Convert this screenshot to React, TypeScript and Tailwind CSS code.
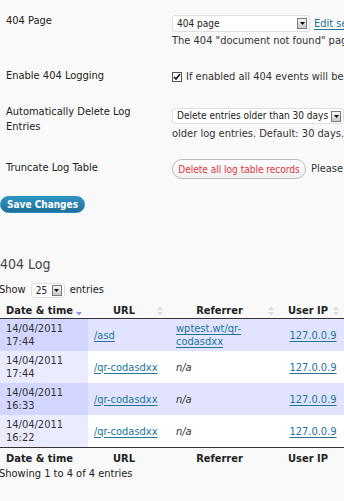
import type { ReactNode } from 'react'

const font = { fontFamily: '"DejaVu Sans Condensed", "DejaVu Sans", Verdana, sans-serif' }

function Arrow() {
  return (
    <span className="flex h-[11px] w-[10px] shrink-0 items-center justify-center border border-[#7a7a7a] bg-linear-to-b from-[#f6f6f6] to-[#c8c8c8]">
      <svg width="5" height="3" viewBox="0 0 5 3">
        <path d="M0 0h5L2.5 3z" fill="#000" />
      </svg>
    </span>
  )
}

function Select({ value, className }: { value: string; className: string }) {
  return (
    <div className={`flex items-center justify-between rounded-[3px] border border-[#dfdfdf] bg-white pl-[4px] pr-[2px] text-[10px] text-[#222] ${className}`}>
      <span className="whitespace-nowrap leading-none">{value}</span>
      <Arrow />
    </div>
  )
}

function SortIcon({ kind }: { kind: 'both' | 'desc' | 'none' }) {
  if (kind === 'none') return <span className="block w-[6px]" />
  if (kind === 'desc')
    return (
      <svg width="6" height="10" viewBox="0 0 6 10" className="block">
        <path d="M0 6h6L3 9.5z" fill="#8f93ee" />
      </svg>
    )
  return (
    <svg width="6" height="10" viewBox="0 0 6 10" className="block">
      <path d="M0 4L3 0.5 6 4z" fill="#dcdcdc" />
      <path d="M0 6h6L3 9.5z" fill="#dcdcdc" />
    </svg>
  )
}

const cols = [
  { label: 'Date & time', width: 'w-[88px]', mr: 'mr-[6px]', sort: 'desc' as const },
  { label: 'URL', width: 'w-[80px]', mr: 'mr-[5px]', sort: 'both' as const },
  { label: 'Referrer', width: 'w-[112px]', mr: 'mr-[6px]', sort: 'both' as const },
  { label: 'User IP', width: 'w-[66px]', mr: 'mr-[7px]', sort: 'both' as const },
]

function HeadRow({ footer }: { footer?: boolean }) {
  return (
    <div className={`flex font-bold text-[#222] ${footer ? 'border-t border-[#333] pt-[4px] pb-[1px]' : 'border-b border-[#333] pt-[6px] pb-[1px]'}`}>
      {cols.map((c) => (
        <div key={c.label} className={`flex items-center pl-[3px] ${c.width}`}>
          <span className="flex-1 text-center leading-[13px] whitespace-nowrap">{c.label}</span>
          <span className={c.mr}>
            <SortIcon kind={footer ? 'none' : c.sort} />
          </span>
        </div>
      ))}
    </div>
  )
}

const rows = [
  { date: '17:44', url: '/asd', ref: ['wptest.wt/qr-', 'codasdxx'] },
  { date: '17:44', url: '/qr-codasdxx', ref: null },
  { date: '16:33', url: '/qr-codasdxx', ref: null },
  { date: '16:22', url: '/qr-codasdxx', ref: null },
]

function Link({ children }: { children: ReactNode }) {
  return <span className="text-[#21759b] underline underline-offset-2">{children}</span>
}

function Row({ label, children, h }: { label: ReactNode; children: ReactNode; h: string }) {
  return (
    <div className={`flex ${h}`}>
      <div className="w-[172px] shrink-0 pl-[6px] leading-[15px] text-[#222]">{label}</div>
      <div className="flex flex-col whitespace-nowrap">{children}</div>
    </div>
  )
}

export default function App() {
  return (
    <div className="h-[501px] w-[344px] overflow-hidden bg-[#f9f9f9] text-[11px] text-[#333]" style={font}>
      <div className="w-[520px] pt-[13px]">
        <Row label="404 Page" h="h-[55px]">
          <div className="mt-[2px] flex items-center">
            <Select value="404 page" className="h-[17px] w-[138px]" />
            <span className="ml-[4px] leading-[15px]">
              <Link>Edit selected page</Link>
            </span>
          </div>
          <div className="mt-[1px] leading-[15px]">The 404 "document not found" page you want to use.</div>
        </Row>

        <Row label="Enable 404 Logging" h="h-[36px]">
          <div className="mt-[1px] flex items-center leading-[15px]">
            <span className="mr-[4px] flex h-[10px] w-[10px] items-center justify-center border border-[#555] bg-white">
              <svg width="8" height="8" viewBox="0 0 8 8">
                <path d="M1 4l2 2 4-5" stroke="#111" strokeWidth="1.6" fill="none" />
              </svg>
            </span>
            If enabled all 404 events will be logged.
          </div>
        </Row>

        <Row label={<>Automatically Delete Log<br />Entries</>} h="h-[55px]">
          <div className="mt-[4px] flex items-center">
            <Select value="Delete entries older than 30 days" className="h-[16px] w-[172px]" />
            <span className="ml-[4px]">Automatically delete</span>
          </div>
          <div className="mt-[1px] leading-[15px]">older log entries. Default: 30 days.</div>
        </Row>

        <Row label={<span className="block pt-[1px]">Truncate Log Table</span>} h="h-[37px]">
          <div className="flex items-center">
            <span className="flex h-[20px] w-[134px] items-center justify-center rounded-full border border-[#bbb] bg-linear-to-b from-white to-[#f0f0f0] text-[10px] text-[#e0363c]">
              Delete all log table records
            </span>
            <span className="ml-[5px]">Please be careful, this cannot be undone.</span>
          </div>
        </Row>

        <div className="flex h-[17px] w-[85px] items-center justify-center rounded-full border border-[#298cba] bg-linear-to-b from-[#2e94c4] to-[#1f6f97] text-[10px] font-bold text-white">
          Save Changes
        </div>

        <h3 className="mt-[42px] text-[14px] leading-[18px] font-normal text-[#464646]">404 Log</h3>

        <div className="-ml-[1px] mt-[10px] flex h-[15px] items-center text-[#222]">
          Show
          <Select value="25" className="ml-[5px] h-[15px] w-[34px]" />
          <span className="ml-[5px]">entries</span>
        </div>

        <div className="w-[346px]">
          <HeadRow />
          {rows.map((r, i) => {
            const odd = i % 2 === 0
            return (
              <div key={i} className={`flex h-[32px] items-center ${odd ? 'bg-[#e2e4ff]' : 'bg-white'}`}>
                <div className={`flex h-full w-[88px] items-center pl-[6px] leading-[13px] ${odd ? 'bg-[#d3d6ff]' : 'bg-[#eaebff]'}`}>
                  <span>
                    14/04/2011
                    <br />
                    {r.date}
                  </span>
                </div>
                <div className="w-[80px] pl-[6px] leading-[13px]">
                  <Link>{r.url}</Link>
                </div>
                <div className="w-[112px] pl-[8px] leading-[13px]">
                  {r.ref ? (
                    <Link>
                      {r.ref[0]}
                      <br />
                      {r.ref[1]}
                    </Link>
                  ) : (
                    <span className="italic">n/a</span>
                  )}
                </div>
                <div className="w-[66px] text-center leading-[13px]">
                  <Link>127.0.0.9</Link>
                </div>
              </div>
            )
          })}
          <HeadRow footer />
        </div>

        <div className="-ml-[1px] mt-[1px] leading-[13px] text-[#222]">Showing 1 to 4 of 4 entries</div>
      </div>
    </div>
  )
}
